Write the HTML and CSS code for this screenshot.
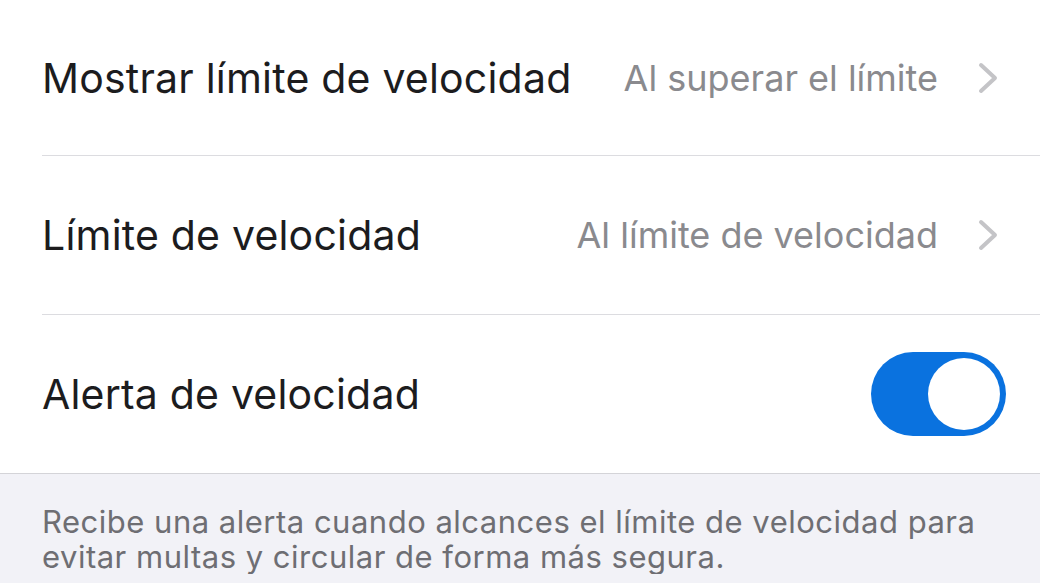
FILE: index.html
```html
<!DOCTYPE html>
<html lang="es">
<head>
    <meta charset="UTF-8">
    <meta name="viewport" content="width=device-width, initial-scale=1.0">
    <title>Alertas de velocidad</title>
    <link rel="stylesheet" href="styles.css">
</head>
<body>
    <div class="settings">
        <div class="group">
            <div class="row row-first">
                <span class="label">Mostrar límite de velocidad</span>
                <span class="value">Al superar el límite</span>
                <svg class="chevron" viewBox="0 0 20 32" width="20" height="32">
                    <path d="M3 3 L17 16 L3 29" fill="none" stroke="#c4c4c7" stroke-width="4" stroke-linecap="round" stroke-linejoin="round"/>
                </svg>
            </div>
            <div class="row">
                <span class="label">Límite de velocidad</span>
                <span class="value">Al límite de velocidad</span>
                <svg class="chevron" viewBox="0 0 20 32" width="20" height="32">
                    <path d="M3 3 L17 16 L3 29" fill="none" stroke="#c4c4c7" stroke-width="4" stroke-linecap="round" stroke-linejoin="round"/>
                </svg>
            </div>
            <div class="row row-toggle">
                <span class="label">Alerta de velocidad</span>
                <span class="toggle on"><span class="knob"></span></span>
            </div>
        </div>
        <p class="footer">Recibe una alerta cuando alcances el límite de velocidad para evitar multas y circular de forma más segura.</p>
    </div>
</body>
</html>
```

FILE: styles.css
```css
body {
    margin: 0;
    padding: 0;
    background-color: #f2f2f7;
    font-family: 'Inter', 'Noto Sans', sans-serif;
    color: #1c1c1e;
    overflow: hidden;
}

.settings {
    width: 1040px;
}

.group {
    background: #fff;
    padding-left: 42px;
    border-bottom: 1px solid #d4d4d8;
}

.row {
    display: flex;
    align-items: center;
    height: 158px;
    padding-right: 42px;
    border-top: 1px solid #dcdce0;
}

.row-first {
    height: 155px;
    border-top: none;
}

.row-toggle {
    padding-right: 34px;
}

.label {
    flex: 1;
    font-size: 41px;
    letter-spacing: 0.2px;
    white-space: nowrap;
}

.value {
    font-size: 36px;
    color: #8a8a8e;
    margin-right: 40px;
    white-space: nowrap;
}

.chevron {
    display: block;
    flex-shrink: 0;
}

.toggle {
    position: relative;
    display: block;
    width: 135px;
    height: 84px;
    border-radius: 42px;
    background: #0a72df;
}

.knob {
    position: absolute;
    top: 6px;
    right: 6px;
    width: 72px;
    height: 72px;
    border-radius: 50%;
    background: #fff;
}

.footer {
    margin: 0;
    padding: 30px 30px 0 42px;
    font-size: 31px;
    line-height: 35px;
    color: #6e6e73;
    letter-spacing: 0.5px;
}
```
